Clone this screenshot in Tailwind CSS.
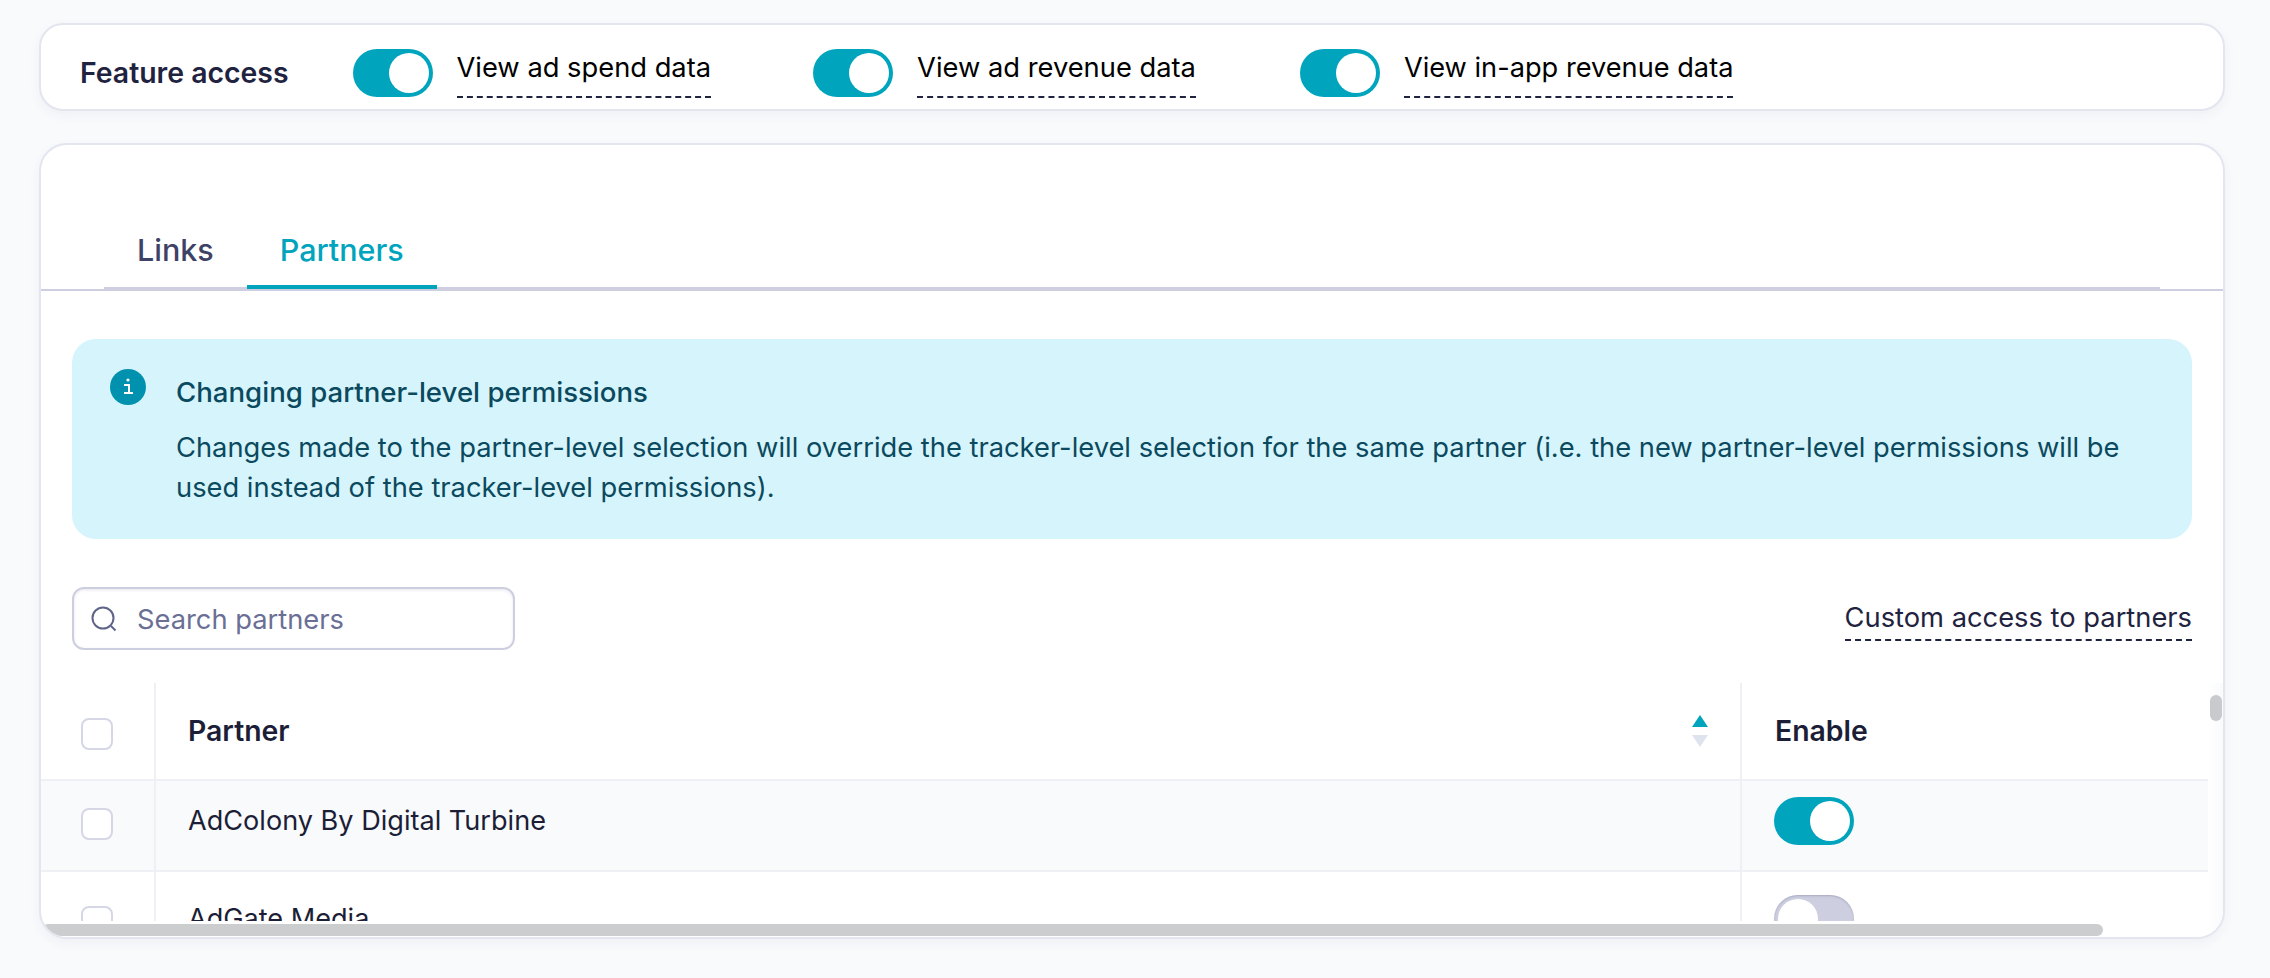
<!DOCTYPE html>
<html lang="en">
<head>
    <meta charset="UTF-8">
    <title>Partner permissions</title>
    <script src="https://cdn.jsdelivr.net/npm/@tailwindcss/browser@4"></script>
</head>
<body class="bg-[#f9fafc] font-[Inter,sans-serif] antialiased h-[978px] overflow-hidden px-[39px] pt-[23px]">

    <!-- feature access -->
    <div class="w-[2186px] h-[88px] bg-white border-2 border-[#e3e5ef] rounded-[24px] shadow-[0_4px_12px_rgba(40,50,90,0.05)] flex items-start pt-[24px] pl-[39px]">
        <div class="h-[48px] flex items-center text-[28.4px] font-semibold text-[#1f2340] mr-[64px]">Feature access</div>

        <div class="flex items-start gap-[24px] mr-[102px]">
            <div class="w-[80px] h-[48px] rounded-full bg-[#00a4bd] flex justify-end p-[4px]"><div class="w-[40px] h-[40px] rounded-full bg-white"></div></div>
            <span class="text-[27.3px] leading-[38px] text-black pb-[9px] border-b-2 border-dashed border-[#1f2340]">View ad spend data</span>
        </div>
        <div class="flex items-start gap-[24px] mr-[104px]">
            <div class="w-[80px] h-[48px] rounded-full bg-[#00a4bd] flex justify-end p-[4px]"><div class="w-[40px] h-[40px] rounded-full bg-white"></div></div>
            <span class="text-[27.3px] leading-[38px] text-black pb-[9px] border-b-2 border-dashed border-[#1f2340]">View ad revenue data</span>
        </div>
        <div class="flex items-start gap-[24px]">
            <div class="w-[80px] h-[48px] rounded-full bg-[#00a4bd] flex justify-end p-[4px]"><div class="w-[40px] h-[40px] rounded-full bg-white"></div></div>
            <span class="text-[27.2px] leading-[38px] text-black pb-[9px] border-b-2 border-dashed border-[#1f2340]">View in-app revenue data</span>
        </div>
    </div>

    <!-- main card -->
    <div class="relative w-[2186px] h-[796px] mt-[32px] bg-white border-2 border-[#e3e5ef] rounded-[28px] shadow-[0_4px_12px_rgba(40,50,90,0.05)] overflow-hidden">

        <div class="h-[146px] border-b-2 border-[#cdcfe0] flex">
            <div class="flex-1 mx-[63px] -mb-[2px] border-b-4 border-[#cdcfe0] flex items-end">
                <div class="px-[33px] h-[60px] text-[30.5px] leading-[42px] font-medium text-[#3d4266] -mb-[2px]">Links</div>
                <div class="px-[33px] h-[60px] text-[30.5px] leading-[42px] font-medium text-[#00a4bd] border-b-4 border-[#00a4bd] -mb-[2px]">Partners</div>
            </div>
        </div>

        <div class="px-[31px]">
            <div class="mt-[48px] h-[200px] bg-[#d6f4fc] rounded-[24px] flex gap-[30px] pl-[38px] pt-[30px] text-[#0b4a5e]">
                <svg class="w-[36px] h-[36px] shrink-0" viewBox="0 0 36 36">
                    <circle cx="18" cy="18" r="18" fill="#0091ae"/>
                    <circle cx="18" cy="11" r="1.6" fill="#fff"/>
                    <path d="M14 16h5v8h-5m0 0h9" fill="none" stroke="#fff" stroke-width="2"/>
                </svg>
                <div class="pt-[3px] text-[27.3px] leading-[40px]">
                    <div class="font-medium text-[27.6px]">Changing partner-level permissions</div>
                    <div class="mt-[16px]">Changes made to the partner-level selection will override the tracker-level selection for the same partner (i.e. the new partner-level permissions will be<br>used instead of the tracker-level permissions).</div>
                </div>
            </div>

            <div class="mt-[48px] h-[63px] flex justify-between items-start">
                <div class="w-[443px] h-[63px] border-2 border-[#cdcfe0] rounded-[12px] shadow-[inset_0_1px_3px_rgba(60,60,110,0.12)] flex items-center pl-[17px] gap-[20px]">
                    <svg class="w-[26px] h-[26px]" viewBox="0 0 26 26" fill="none" stroke="#5f6488" stroke-width="2"><circle cx="12" cy="12" r="10.5"/><path d="M20 20l4.5 4.5"/></svg>
                    <span class="text-[27.3px] text-[#6b6f96] pt-[3px]">Search partners</span>
                </div>
                <span class="text-[27.3px] leading-[38px] text-[#1f2340] pb-[2px] mt-[12px] border-b-2 border-dashed border-[#1f2340]">Custom access to partners</span>
            </div>
        </div>

        <!-- partners table -->
        <div class="mt-[33px] mr-[15px] h-[238px] overflow-hidden grid grid-cols-[115px_1586px_1fr] grid-rows-[98px_91px_1fr] text-[27.1px] leading-[48px] text-[#1b1e36]">
            <div class="border-r-2 border-b-2 border-[#eef0f6] pl-[40px] pt-[35px]"><div class="w-[32px] h-[32px] bg-white border-2 border-[#d5d7e6] rounded-[8px]"></div></div>
            <div class="border-r-2 border-b-2 border-[#eef0f6] pl-[32px] pr-[32px] pt-[24px] flex justify-between items-start">
                <span class="font-semibold text-[28.4px]">Partner</span>
                <svg class="w-[16px] h-[32px] mt-[8px]" viewBox="0 0 16 32"><path d="M8 0l8 12H0z" fill="#00a4bd"/><path d="M0 20h16l-8 12z" fill="#dfe3ee"/></svg>
            </div>
            <div class="border-b-2 border-[#eef0f6] pl-[33px] pt-[24px] font-semibold text-[28.4px]">Enable</div>

            <div class="bg-[#f9fafc] border-r-2 border-b-2 border-[#eef0f6] pl-[40px] pt-[27px]"><div class="w-[32px] h-[32px] bg-white border-2 border-[#d5d7e6] rounded-[8px]"></div></div>
            <div class="bg-[#f9fafc] border-r-2 border-b-2 border-[#eef0f6] pl-[32px] pt-[16px]">AdColony By Digital Turbine</div>
            <div class="bg-[#f9fafc] border-b-2 border-[#eef0f6] pl-[32px] pt-[16px]">
                <div class="w-[80px] h-[48px] rounded-full bg-[#00a4bd] flex justify-end p-[4px]"><div class="w-[40px] h-[40px] rounded-full bg-white"></div></div>
            </div>

            <div class="border-r-2 border-[#eef0f6] pl-[40px] pt-[34px]"><div class="w-[32px] h-[32px] bg-white border-2 border-[#d5d7e6] rounded-[8px]"></div></div>
            <div class="border-r-2 border-[#eef0f6] pl-[32px] pt-[23px]">AdGate Media</div>
            <div class="pl-[32px] pt-[23px]">
                <div class="w-[80px] h-[48px] rounded-full bg-[#cdcfe0] shadow-[inset_0_1px_2px_rgba(60,60,110,0.25)] flex p-[4px]"><div class="w-[40px] h-[40px] rounded-full bg-white"></div></div>
            </div>
        </div>

        <!-- scrollbars -->
        <div class="absolute right-0 top-[538px] bottom-0 w-[15px] bg-linear-to-r from-white to-[#f9fafc]"></div>
        <div class="absolute right-[1px] top-[550px] w-[12px] h-[26px] rounded-full bg-[#c9cacd]"></div>
        <div class="absolute left-[1px] bottom-[1px] w-[2061px] h-[12px] rounded-full bg-[#cccdcf]"></div>
    </div>

</body>
</html>
